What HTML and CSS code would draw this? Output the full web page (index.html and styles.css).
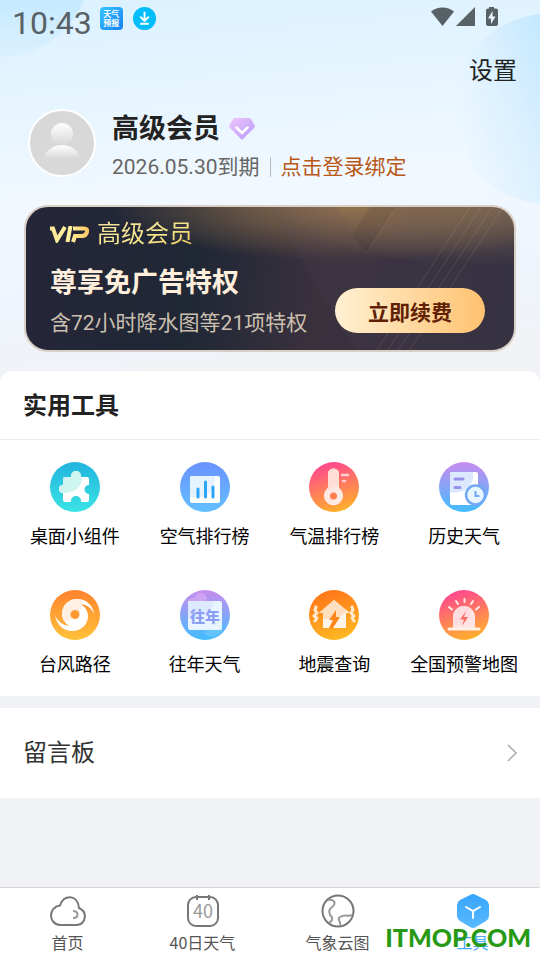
FILE: index.html
```
<!DOCTYPE html>
<html lang="zh-CN">
<head>
    <meta charset="UTF-8">
    <meta name="viewport" content="width=device-width, initial-scale=1.0">
    <title>工具</title>
    <link rel="stylesheet" href="styles.css">
</head>
<body>
    <div class="app-screen">
        <!-- Sky backdrop behind the profile area -->
        <div class="sky">
            <span class="bubble bubble-left"></span>
            <span class="bubble bubble-right"></span>
        </div>

        <div class="status-bar">
            <span class="clock">10:43</span>
            <span class="app-badge"><span>天气</span><span>预报</span></span>
            <svg class="download" viewBox="0 0 24 24" width="23" height="23">
                <circle cx="12" cy="12" r="12" fill="#00bdfc"/>
                <path d="M12 5v9M7.500 10l4.500 4.500L16.500 10M7.500 17.500h9" fill="none" stroke="#fff" stroke-width="2"/>
            </svg>
            <svg class="signals" viewBox="0 0 68 20" width="68" height="20" fill="#586165">
                <path d="M0 4.500C6.500-1 16.500-1 23 4.500L11.500 19z"/>
                <path d="M44 0v19H25z"/>
                <path d="M58 0h5v1.500h2q2 0 2 2V17q0 2-2 2h-8q-2 0-2-2V3.500q0-2 2-2h1z"/>
                <path d="M61.500 4l-4.500 7.500h3V17l4.500-7.500h-3z" fill="#e8f6ff"/>
            </svg>
        </div>

        <div class="top-bar">
            <button class="settings" type="button">设置</button>
        </div>

        <div class="profile">
            <svg class="avatar" viewBox="0 0 68 68" width="68" height="68">
                <defs>
                    <linearGradient id="avatarFill" x1="0" y1="0" x2="0" y2="1">
                        <stop offset="0" stop-color="#fff"/>
                        <stop offset="1" stop-color="#d8d8d8"/>
                    </linearGradient>
                </defs>
                <circle cx="34" cy="34" r="33" fill="#d8d8d8" stroke="#fff" stroke-width="2"/>
                <path d="M15 50C18 41 25 36 34 36s16 5 19 14z" fill="url(#avatarFill)"/>
                <circle cx="34" cy="25" r="11" fill="url(#avatarFill)"/>
            </svg>
            <div class="profile-text">
                <div class="profile-name">
                    <span>高级会员</span>
                    <svg viewBox="0 0 26 22" width="26" height="22">
                        <defs>
                            <linearGradient id="gemFill" x1="0" y1="0" x2="1" y2="1">
                                <stop offset="0" stop-color="#efc7fa"/>
                                <stop offset="1" stop-color="#b797fb"/>
                            </linearGradient>
                        </defs>
                        <path d="M6 0h14q1 0 2 1l4 7q0 1-1 2L14 21q-1 1-2 0L1 10Q0 9 0 8l4-7q1-1 2-1z" fill="url(#gemFill)"/>
                        <path d="M7.500 9.500L13 15l5.500-5.500" fill="none" stroke="#fff" stroke-width="2.500" stroke-linecap="round" stroke-linejoin="round"/>
                    </svg>
                </div>
                <div class="profile-sub">
                    <span class="expire">2026.05.30到期</span>
                    <a class="bind-link" href="#">点击登录绑定</a>
                </div>
            </div>
        </div>

        <div class="vip-card">
            <svg class="vip-lines" viewBox="0 0 490 144" preserveAspectRatio="xMaxYMid slice">
                <path d="M244 0L331 144H490V0H372L342 48 312 0z" fill="#604a5c" opacity=".13"/>
                <path d="M346 0h26L342 46 328 28z" fill="#2a2430" opacity=".12"/>
                <path d="M372 0L342 46M446 0L352 144M457 0L363 144M468 0L374 144M479 0L385 144" fill="none" stroke="#ddc9b0" stroke-width="1" opacity=".15"/>
            </svg>
            <div class="vip-title">
                <svg viewBox="0 0 40 17" width="40" height="17" role="img" aria-label="VIP">
                    <defs>
                        <linearGradient id="vipFill" gradientUnits="userSpaceOnUse" x1="0" y1="0" x2="40" y2="0">
                            <stop offset="0" stop-color="#ffe59a"/>
                            <stop offset=".5" stop-color="#fff0a0"/>
                            <stop offset="1" stop-color="#ffc45c"/>
                        </linearGradient>
                    </defs>
                    <g fill="none" stroke="url(#vipFill)" stroke-width="4">
                        <path d="M0 2.500H3L7 14L15 1"/>
                        <path d="M20.500 0L17.500 16"/>
                        <path d="M23 2.500H34Q38 2.500 37 6Q36 10 32 10H25L23 16"/>
                    </g>
                </svg>
                <span>高级会员</span>
            </div>
            <div class="vip-headline">尊享免广告特权</div>
            <div class="vip-detail">含72小时降水图等21项特权</div>
            <button class="renew" type="button">立即续费</button>
        </div>

        <div class="tools">
            <h2 class="tools-title">实用工具</h2>
            <div class="tools-grid">
                <a class="tool" href="#">
                    <svg viewBox="0 0 50 50" width="50" height="50">
                        <defs>
                            <linearGradient id="teal" x1="0" y1="0" x2="0" y2="1">
                                <stop offset="0" stop-color="#21b4df"/>
                                <stop offset="1" stop-color="#3be3e4"/>
                            </linearGradient>
                        </defs>
                        <circle cx="25" cy="25" r="25" fill="url(#teal)"/>
                        <path d="M15 15h6v-1a5 5 0 0 1 10 0v1h6q2 0 2 2v6a4.500 4.500 0 0 0 0 9v6q0 2-2 2h-6v-1a5 5 0 0 0-10 0v1h-6q-2 0-2-2v-7a4 4 0 0 1 0-8v-6q0-2 2-2z" fill="#fff"/>
                        <path d="M15 15h6v-1a5 5 0 0 1 10 0C34 24 25 31 13 31a4 4 0 0 1 0-8v-6q0-2 2-2z" fill="#cef5f0"/>
                    </svg>
                    <span>桌面小组件</span>
                </a>
                <a class="tool" href="#">
                    <svg viewBox="0 0 50 50" width="50" height="50">
                        <defs>
                            <linearGradient id="blue" x1="0" y1="0" x2="0" y2="1">
                                <stop offset="0" stop-color="#6992ff"/>
                                <stop offset="1" stop-color="#63c0ff"/>
                            </linearGradient>
                        </defs>
                        <circle cx="25" cy="25" r="25" fill="url(#blue)"/>
                        <rect x="10" y="14" width="30" height="27" rx="2" fill="#fff"/>
                        <path d="M12 14H35C36 28 28 38 10 35V16q0-2 2-2z" fill="#e5f2ff"/>
                        <path d="M18 27v8M25.500 20v15M33 25v10" stroke="#2da4f5" stroke-width="3" stroke-linecap="round"/>
                    </svg>
                    <span>空气排行榜</span>
                </a>
                <a class="tool" href="#">
                    <svg viewBox="0 0 50 50" width="50" height="50">
                        <defs>
                            <linearGradient id="pink" x1=".3" y1="0" x2=".6" y2="1">
                                <stop offset="0" stop-color="#ff4592"/>
                                <stop offset="1" stop-color="#ffb02b"/>
                            </linearGradient>
                        </defs>
                        <circle cx="25" cy="25" r="25" fill="url(#pink)"/>
                        <path d="M19 12a5.500 5.500 0 0 1 11 0v14a9.500 9.500 0 1 1-11 0z" fill="#ffe9e3"/>
                        <path d="M19 12a5.500 5.500 0 0 1 11 0v11C26 23 22 28 16 30l3-5z" fill="#ffded8"/>
                        <circle cx="24.500" cy="34" r="3.500" fill="#ff7e50"/>
                        <path d="M33 13h6M34 19h2" stroke="#ffd0d0" stroke-width="2.500" stroke-linecap="round"/>
                    </svg>
                    <span>气温排行榜</span>
                </a>
                <a class="tool" href="#">
                    <svg viewBox="0 0 50 50" width="50" height="50">
                        <defs>
                            <linearGradient id="violet" x1="0" y1="0" x2="0" y2="1">
                                <stop offset="0" stop-color="#c98cee"/>
                                <stop offset="1" stop-color="#42bdff"/>
                            </linearGradient>
                        </defs>
                        <circle cx="25" cy="25" r="25" fill="url(#violet)"/>
                        <rect x="11" y="10" width="28" height="33" rx="2" fill="#fff"/>
                        <path d="M13 10H34C36 23 26 33 11 30V12q0-2 2-2z" fill="#dbe8fd"/>
                        <path d="M16 17h8M16 25.500h5" stroke="#9791ed" stroke-width="3" stroke-linecap="round"/>
                        <circle cx="36.500" cy="33" r="9.500" fill="#e8f7ff" stroke="#72a8f3" stroke-width="2.500"/>
                        <path d="M36.500 29v5h4" fill="none" stroke="#72a8f3" stroke-width="2"/>
                    </svg>
                    <span>历史天气</span>
                </a>
                <a class="tool" href="#">
                    <svg viewBox="0 0 50 50" width="50" height="50">
                        <defs>
                            <linearGradient id="amber" x1="0" y1="0" x2="0" y2="1">
                                <stop offset="0" stop-color="#ff832e"/>
                                <stop offset="1" stop-color="#ffc23a"/>
                            </linearGradient>
                        </defs>
                        <circle cx="25" cy="25" r="25" fill="url(#amber)"/>
                        <path d="M44 24C43 15 36 9 27 9C18 9 12 16 12 24C12 29 15 33 19 36C12 35 8 31 5 26C7 35 14 41 22 41C32 41 38 34 38 26C38 21 35 17 31 14C38 15 42 19 44 24z" fill="#fff"/>
                        <path d="M27 9C18 9 12 16 12 24q0 3 2 7C23 32 32 23 32 14V10z" fill="#fff0e3"/>
                        <circle cx="25" cy="24.500" r="4.500" fill="#ff9934"/>
                    </svg>
                    <span>台风路径</span>
                </a>
                <a class="tool" href="#">
                    <svg viewBox="0 0 50 50" width="50" height="50">
                        <circle cx="25" cy="25" r="25" fill="url(#violet)"/>
                        <path d="M7 12C9 8 12 7 15 8C16 2 25 0 27 8l-1 4z" fill="#d8a9f3" opacity=".7"/>
                        <path d="M24 42a5 5 0 0 1 5-2c3-6 14-5 14 0-4 5-11 8-16 6z" fill="#6bcafa" opacity=".7"/>
                        <rect x="8" y="11" width="34" height="29" rx="2" fill="#e8f4ff"/>
                        <path d="M10 11H34C32 21 24 30 8 29V13q0-2 2-2z" fill="#dce9fe"/>
                        <text class="year-text" x="25" y="32" text-anchor="middle">往年</text>
                    </svg>
                    <span>往年天气</span>
                </a>
                <a class="tool" href="#">
                    <svg viewBox="0 0 50 50" width="50" height="50">
                        <defs>
                            <linearGradient id="orange" x1=".3" y1="0" x2=".6" y2="1">
                                <stop offset="0" stop-color="#ff7418"/>
                                <stop offset="1" stop-color="#ffb923"/>
                            </linearGradient>
                        </defs>
                        <circle cx="25" cy="25" r="25" fill="url(#orange)"/>
                        <path d="M25 10L41 23H37V38H14V23H10z" fill="#fff4e8"/>
                        <path d="M25 10L38 21C33 27 25 29 14 29V23H10z" fill="#ffdfbd"/>
                        <path d="M27 20L20 30h4l-4 8h4l7-11h-4z" fill="#ff861a"/>
                        <path d="M7 17l-1 3 2 3-3 3 3 2-2 3M43 17l1 3-2 3 3 3-2 2 2 3" fill="none" stroke="#ffe9d0" stroke-width="3" stroke-linecap="round" stroke-linejoin="round"/>
                    </svg>
                    <span>地震查询</span>
                </a>
                <a class="tool" href="#">
                    <svg viewBox="0 0 50 50" width="50" height="50">
                        <circle cx="25" cy="25" r="25" fill="url(#pink)"/>
                        <path d="M14 38V27a11 11 0 0 1 22 0v11z" fill="#ffe5e3"/>
                        <path d="M14 35V27a11 11 0 0 1 18-8.500V23C31 30 24 36 14 35z" fill="#ffd8dd" opacity=".7"/>
                        <path d="M10 39H40" stroke="#fff0e8" stroke-width="3" stroke-linecap="round"/>
                        <path d="M25.500 9v3M17 11l2 3M34 11l-2 3M10 17l3 2.500M40 17l-3 2.500" stroke="#ffe9eb" stroke-width="2" stroke-linecap="round"/>
                        <path d="M27 21l-6 8.500h4L23 36l6-9h-4z" fill="#ff6a66"/>
                    </svg>
                    <span>全国预警地图</span>
                </a>
            </div>
        </div>

        <a class="message-row" href="#">
            <span>留言板</span>
            <svg viewBox="0 0 12 20" width="12" height="20">
                <path d="M2 2l8 8-8 8" fill="none" stroke="#aaa" stroke-width="1.500"/>
            </svg>
        </a>

        <nav class="tab-bar">
            <a class="tab" href="#">
                <svg viewBox="0 0 36 36" width="36" height="36" fill="none" stroke="#777" stroke-width="2">
                    <path d="M10 32C-2 31 -2 14 10 12.500C13 1 28 1 29 15C38 19 36 31 27 32z"/>
                    <path d="M23 18c6 0 6 7 0 7" stroke="#999"/>
                </svg>
                <span>首页</span>
            </a>
            <a class="tab" href="#">
                <svg viewBox="0 0 36 36" width="36" height="36">
                    <rect x="3" y="4" width="30" height="29" rx="8" fill="none" stroke="#777" stroke-width="2"/>
                    <path d="M12 2v5M24 2v5" stroke="#777" stroke-width="2"/>
                    <text class="forty-text" x="18" y="25" text-anchor="middle">40</text>
                </svg>
                <span>40日天气</span>
            </a>
            <a class="tab" href="#">
                <svg viewBox="0 0 36 36" width="36" height="36" fill="none" stroke="#777" stroke-width="2">
                    <circle cx="18" cy="18" r="15.500"/>
                    <path d="M8 7C14 6 17 10 12 14C7 18 10 20 10 22C14 25 12 28 9 30M32 22C28 24 25 21 20 24C16 27 22 28 20 33" stroke="#999"/>
                </svg>
                <span>气象云图</span>
            </a>
            <a class="tab active" href="#">
                <svg viewBox="0 0 36 36" width="36" height="36">
                    <defs>
                        <linearGradient id="hexFill" x1="0" y1="0" x2="0" y2="1">
                            <stop offset="0" stop-color="#36a4fd"/>
                            <stop offset="1" stop-color="#5abaff"/>
                        </linearGradient>
                    </defs>
                    <path d="M15 2q3-2 6 0l10 5q3 2 3 5v11q0 3-3 5l-10 6q-3 2-6 0L5 28q-3-2-3-5V12q0-3 3-5z" fill="url(#hexFill)"/>
                    <path d="M11 14l7 4 7-4M18 18v7" fill="none" stroke="#fff" stroke-width="2" stroke-linecap="round"/>
                </svg>
                <span>工具</span>
            </a>
            <span class="watermark">ITMOP.COM</span>
        </nav>
    </div>
</body>
</html>
```
FILE: styles.css
```
* {
    box-sizing: border-box;
}

body {
    margin: 0;
    font-family: Roboto, "Noto Sans CJK SC", sans-serif;
    background-color: #f0f2f5;
    color: #222;
}

a {
    color: inherit;
    text-decoration: none;
}

button {
    border: none;
    background: none;
    padding: 0;
    font-family: inherit;
    cursor: pointer;
}

svg {
    display: block;
    flex-shrink: 0;
}

.app-screen {
    position: relative;
    min-height: 100vh;
    display: flex;
    flex-direction: column;
}

/* Sky backdrop */
.sky {
    position: absolute;
    top: 0;
    left: 0;
    right: 0;
    height: 380px;
    overflow: hidden;
    z-index: -1;
    background: linear-gradient(175deg, #dbf1ff 0%, #e6f5ff 25%, #f1f8ff 48%, #eef5fd 70%, #f0f2f5 92%);
}

.bubble {
    position: absolute;
    border-radius: 50%;
}

.bubble-left {
    width: 180px;
    height: 180px;
    left: -90px;
    top: -123px;
    background: linear-gradient(180deg, #c4e9ff 65%, #dbf1ff);
}

.bubble-right {
    width: 190px;
    height: 190px;
    right: -103px;
    top: 14px;
    background: linear-gradient(250deg, #c4e8ff 40%, #d8efff 60%, #eef8ff 90%);
}

/* Status bar */
.status-bar {
    display: flex;
    align-items: flex-start;
    height: 46px;
    padding: 7px 41px 0 12px;
    color: #586165;
}

.clock {
    font-size: 32px;
    line-height: 32px;
}

.app-badge {
    display: flex;
    flex-direction: column;
    align-items: center;
    justify-content: center;
    width: 23px;
    height: 23px;
    margin-left: 8px;
    border-radius: 4px;
    background: linear-gradient(135deg, #36c5fb, #1680f5);
    color: #fff;
    font-size: 8px;
    font-weight: 700;
    line-height: 9px;
}

.download {
    margin-left: 10px;
}

.signals {
    margin-left: auto;
}

.top-bar {
    display: flex;
    justify-content: flex-end;
    padding: 7px 23px 0;
}

.settings {
    font-size: 24px;
    line-height: 36px;
    color: #222;
}

/* Profile */
.profile {
    display: flex;
    align-items: flex-start;
    gap: 16px;
    padding: 20px 28px 0;
}

.profile-name {
    display: flex;
    align-items: center;
    gap: 9px;
    font-size: 27px;
    font-weight: 700;
    line-height: 40px;
}

.profile-sub {
    display: flex;
    align-items: center;
    font-size: 21px;
    line-height: 36px;
    color: #666;
}

.bind-link {
    margin-left: 10px;
    padding-left: 10px;
    line-height: 20px;
    border-left: 1px solid #bbb;
    color: #b85716;
}

/* Membership card */
.vip-card {
    position: relative;
    overflow: hidden;
    margin: 20px 24px 19px;
    padding: 9px 24px 10px;
    border: 2px solid #d8cfc7;
    border-radius: 24px;
    background:
        radial-gradient(ellipse 240px 56px at 66% 0, #94734f, transparent),
        radial-gradient(ellipse 200px 60px at 92% 0, #75634f, transparent),
        linear-gradient(100deg, #252638, #202735 35%, #3a313d 60%, #302f3e);
    background-origin: border-box;
}

.vip-lines {
    position: absolute;
    top: 0;
    left: 0;
    width: 100%;
    height: 100%;
}

.vip-title {
    display: flex;
    align-items: center;
    gap: 7px;
    font-size: 24px;
    line-height: 36px;
    color: #f4d276;
}

.vip-title span {
    background: linear-gradient(160deg, #f8e2a0, #f5e68a 60%, #eeb94f);
    -webkit-background-clip: text;
    background-clip: text;
    color: transparent;
}

.vip-headline {
    padding-top: 11px;
    font-size: 27px;
    font-weight: 700;
    line-height: 40px;
    color: #ffefdc;
}

.vip-detail {
    padding-top: 3px;
    font-size: 21px;
    line-height: 34px;
    color: #cbc0b0;
}

.renew {
    position: absolute;
    right: 29px;
    bottom: 17px;
    width: 150px;
    height: 45px;
    border-radius: 23px;
    background: linear-gradient(90deg, #fff0d3, #ffc270);
    color: #5f2004;
    font-size: 21px;
    font-weight: 700;
}

/* Tools */
.tools {
    background-color: #fff;
    border-radius: 12px 12px 0 0;
}

.tools-title {
    margin: 0;
    padding: 17px 23px 15px;
    border-bottom: 1px solid #ececec;
    font-size: 24px;
    line-height: 36px;
}

.tools-grid {
    display: grid;
    grid-template-columns: repeat(4, 1fr);
    row-gap: 39px;
    padding: 22px 11px 17px 10px;
}

.tool {
    display: flex;
    flex-direction: column;
    align-items: center;
    gap: 11px;
    color: #000;
    font-size: 18px;
    line-height: 28px;
    white-space: nowrap;
}

.year-text {
    font-size: 15px;
    font-weight: 900;
    fill: #8b9df5;
}

/* Message board */
.message-row {
    display: flex;
    align-items: center;
    justify-content: space-between;
    margin-top: 12px;
    padding: 27px 22px 27px 23px;
    background-color: #fff;
    color: #333;
    font-size: 24px;
    line-height: 36px;
}

/* Bottom tabs */
.tab-bar {
    position: relative;
    display: flex;
    margin-top: auto;
    padding: 5px 0;
    border-top: 1px solid #d8d8d8;
    background-color: #fff;
}

.tab {
    flex: 1;
    display: flex;
    flex-direction: column;
    align-items: center;
    font-family: "Noto Sans CJK SC", sans-serif;
    font-size: 16px;
    line-height: 26px;
    color: #555;
}

.tab.active {
    color: #46acfb;
}

.forty-text {
    font-size: 18px;
    fill: #999;
}

.watermark {
    position: absolute;
    right: 9px;
    bottom: 5px;
    font-family: Lato, sans-serif;
    font-size: 25px;
    font-weight: 900;
    line-height: 36px;
    color: #279914;
}
```
